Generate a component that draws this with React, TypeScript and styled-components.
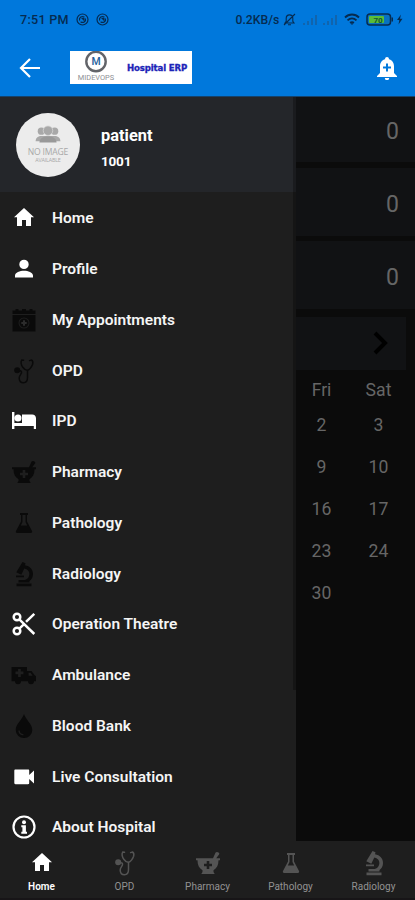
import React from "react";
import styled, { createGlobalStyle } from "styled-components";

const GlobalStyle = createGlobalStyle`
  * { box-sizing: border-box; }
  body { margin: 0; background: #1e1e1e; font-family: Roboto, "Liberation Sans", sans-serif; }
`;

const Screen = styled.div`
  width: 415px;
  height: 900px;
  display: flex;
  flex-direction: column;
  overflow: hidden;
  background: #1e1e1e;
`;

const Header = styled.header`
  height: 97px;
  flex: none;
  background: #0078dc;
  border-bottom: 1px solid #15426b;
`;

const StatusBar = styled.div`
  height: 39px;
  padding: 0 12px 0 20px;
  display: flex;
  align-items: center;
  color: #062b50;
`;

const Clock = styled.span`
  width: 56px;
  font-size: 12.6px;
  font-weight: 500;
  letter-spacing: 0.25px;
  white-space: nowrap;
`;

const StatusIcons = styled.div<{ $end?: boolean }>`
  display: flex;
  align-items: center;
  gap: ${(p) => (p.$end ? "6.5px" : "7px")};
  margin-left: ${(p) => (p.$end ? "auto" : "0")};
`;

const Speed = styled.span`
  font-size: 12.2px;
  font-weight: 500;
  width: 44px;
  margin-right: -3px;
  white-space: nowrap;
`;

const AppBar = styled.div`
  height: 57px;
  padding: 0 17px 0 19px;
  display: flex;
  align-items: center;
`;

const Logo = styled.div`
  width: 122px;
  height: 33px;
  margin-left: 29px;
  background: #fff;
  display: flex;
  align-items: center;
`;

const LogoMark = styled.div`
  width: 52px;
  height: 33px;
  display: flex;
  flex-direction: column;
  align-items: center;
  font-size: 7.4px;
  line-height: 9px;
  color: #8d8f94;
`;

const LogoName = styled.span`
  margin-left: 5px;
  font: bold 8.6px/12px "DejaVu Sans", sans-serif;
  -webkit-text-stroke: 0.3px #1d24b8;
  letter-spacing: -0.15px;
  color: #1d24b8;
  white-space: nowrap;
`;

const BellSlot = styled.div`
  margin-left: auto;
  display: flex;
`;

const Main = styled.main`
  height: 744px;
  flex: none;
  display: flex;
  overflow: hidden;
  background: #0b0b0b;
`;

const Drawer = styled.aside`
  width: 296px;
  flex: none;
  position: relative;
  background: #1e1e1e;
`;

const ScrollThumb = styled.div`
  position: absolute;
  top: 0;
  right: 0;
  width: 3px;
  height: 593px;
  background: rgba(0, 0, 0, 0.28);
`;

const Patient = styled.div`
  height: 95px;
  padding-left: 16px;
  display: flex;
  align-items: center;
  gap: 20px;
  background: #24262a;
  color: #fff;
`;

const Avatar = styled.div`
  width: 64px;
  height: 64px;
  border-radius: 50%;
  background: #ececec;
  display: flex;
  flex-direction: column;
  align-items: center;
  padding-top: 11px;
  color: #a8a8a8;
`;

const AvatarText = styled.span<{ $size: number; $gap: number }>`
  margin-top: ${(p) => p.$gap}px;
  font: ${(p) => p.$size}px/${(p) => p.$size}px "Open Sans", sans-serif;
  letter-spacing: -0.2px;
  white-space: nowrap;
`;

const PatientInfo = styled.div`
  display: flex;
  flex-direction: column;
  padding: 3px 0 0 1px;
  font-weight: 700;
`;

const PatientName = styled.span`
  font-size: 16.4px;
  line-height: 24px;
  margin-top: 4px;
`;

const PatientId = styled.span`
  font-size: 13.5px;
  line-height: 24px;
  margin-top: 1px;
  letter-spacing: -0.2px;
`;

const Menu = styled.nav`
  display: grid;
  grid-auto-rows: 50.75px;
  padding-top: 1px;
`;

const MenuItem = styled.a`
  display: flex;
  align-items: center;
  padding-left: 10px;
  font-size: 15.5px;
  font-weight: 600;
  color: #f5f5f5;
  white-space: nowrap;
`;

const MenuIcon = styled.span<{ $dark?: boolean }>`
  width: 42px;
  height: 28px;
  display: flex;
  color: ${(p) => (p.$dark ? "#0a0a0a" : "#fff")};
`;

const Dashboard = styled.section`
  flex: 1;
  display: flex;
  flex-direction: column;
`;

const Card = styled.div`
  height: 68px;
  flex: none;
  margin-bottom: 5.5px;
  padding: 5px 16px 0 0;
  display: flex;
  align-items: center;
  justify-content: flex-end;
  background: #111214;
  color: #666;
  font-size: 23px;

  &:first-child {
    height: 65px;
    padding-top: 3px;
  }
`;

const MonthBar = styled.div`
  height: 53px;
  width: 110px;
  margin-top: 2px;
  padding-right: 17px;
  display: flex;
  align-items: center;
  justify-content: flex-end;
  background: #111214;
  color: #000;
`;

const Calendar = styled.div`
  margin: 7px 0 0 -3px;
  display: grid;
  grid-template-columns: 57px 57px;
  grid-template-rows: 27px;
  grid-auto-rows: 42.2px;
  align-items: center;
  justify-items: center;
  color: #666;
  font-size: 17.6px;
`;

const TabBar = styled.nav`
  height: 59px;
  display: grid;
  grid-template-columns: repeat(5, 83px);
  background: #1e1e1e;
  border-bottom: 2px solid #171517;
`;

const Tab = styled.a<{ $active?: boolean }>`
  display: flex;
  flex-direction: column;
  align-items: center;
  padding-top: 8px;
  gap: 3px;
  font-size: 10px;
  line-height: 13px;
  font-weight: ${(p) => (p.$active ? 600 : 400)};
  color: ${(p) => (p.$active ? "#fff" : "#929292")};

  svg {
    color: ${(p) => (p.$active ? "#fff" : "#545454")};
  }
`;

type IconName =
  | "home" | "person" | "calendar" | "steth" | "bed" | "mortar" | "flask"
  | "scope" | "scissors" | "ambulance" | "drop" | "video" | "info";

const shapes: Record<IconName, React.ReactNode> = {
  home: <path d="M14 4 4 13.2h3V22h5v-6h4v6h5v-8.8h3z" />,
  person: <path d="M14 4.7a4.7 4.7 0 1 1 0 9.4 4.7 4.7 0 0 1 0-9.4zM5 22.5v-2c0-3.1 5-4.8 9-4.8s9 1.7 9 4.8v2z" />,
  calendar: (
    <g>
      <path fillRule="evenodd" d="M2.500 4.500h3V3h3v1.500h3.500V3h4v1.500h3.500V3h3v1.500h3V8h-23zM2.500 9h23v16.500h-23zM14 11.500a5.500 5.500 0 1 0 0 11 5.500 5.500 0 0 0 0-11zm0 1a4.500 4.500 0 1 1 0 9 4.500 4.500 0 0 1 0-9z" />
      <path d="M13 14.300h2V16h1.700v2H15v1.700h-2V18h-1.700v-2H13z" fill="#2c2c2c" />
    </g>
  ),
  steth: (
    <g fill="none" stroke="currentColor" strokeWidth="1.5" strokeLinecap="round">
      <path d="M13.5 3.3 11.8 3c-1.5 2-.5 5.5 1 7.3 1.600 2.200 3.200 3.200 4.800 3 1.800-.2 4.200-3.600 5-6 .5-1.800.2-3.600-1.200-4.300l-1.800.6" />
      <path d="M17.5 13.5v7c0 3.300-1.400 5.200-4 5.200s-4.300-2-4.300-4.800c0-3 3.300-4 2.200-6.600L8 13" />
      <circle cx="7.2" cy="13.3" r="2.3" fill="currentColor" />
    </g>
  ),
  bed: (
    <path fillRule="evenodd" d="M2 5h2.400v11H12V7.500h10.200c2.200 0 3.800 1.600 3.800 3.800V22h-2.200v-3H4.400v3H2zM8 7.500a3.500 3.500 0 1 1 0 7 3.500 3.500 0 0 1 0-7z" />
  ),
  mortar: (
    <path fillRule="evenodd" d="m19 9.200 2.600-5.600c1-1.500 4.600 0 3.600 1.700l-3 3.900H26v2h-1.500c0 5-1.800 8-5 10v1.800l1.200 2H7.300l1.200-2v-1.800c-3.200-2-5-5-5-10H2v-2zM12.700 12v2.700H10v2.600h2.700V20h2.600v-2.700H18v-2.600h-2.700V12z" />
  ),
  flask: (
    <path fillRule="evenodd" d="M10 4h8v2h-1v6.500l5 9.500c.5 1-.1 2-1.200 2H7.200c-1.100 0-1.700-1-1.200-2l5-9.500V6h-1zm2.500 2v7L10.800 16.500h6.400L15.500 13V6z" />
  ),
  scope: (
    <g>
      <path d="m12.500 2 3 1.300-.5 2c5 .7 8 4.200 8 8.700 0 3.200-1.500 5.600-3.500 7v1.500H8.500V20h6.200c2.700-.6 4.700-3 4.700-6 0-2.800-1.800-4.800-5.100-5.500l-3 6.200-5-2.400z" />
      <path d="M6 15.500h8v1.800H6zM6.500 23.500h15v2.800h-15z" />
    </g>
  ),
  scissors: (
    <g fill="none" stroke="currentColor" strokeWidth="2.5">
      <circle cx="7" cy="7" r="3.3" />
      <circle cx="7" cy="21" r="3.3" />
      <path d="M9.300 9.400 24.300 24M9.300 18.600l5-4.800M16 11.800l8.300-8" />
    </g>
  ),
  ambulance: (
    <path fillRule="evenodd" d="M1.500 6H17v4h4.500l3 4 1.500 1.300v5h-2a3 3 0 0 1-6 0h-7a3 3 0 0 1-6 0H1.500zm6.600 2v2.600H5.500v2.700h2.600V16h2.700v-2.700h2.600v-2.700h-2.600V8zm10.500 3.800v3h4l-2-3z" />
  ),
  drop: <path fillRule="evenodd" d="M14 2c1.700 5.500 8.300 10.200 8.300 16A8 8 0 0 1 14 26a8 8 0 0 1-8.300-8C5.700 12.200 12.300 7.500 14 2zm-5.600 16.500c0 2.800 2 4.800 5 4.800v-1.200c-2.500-.2-3.500-1.600-3.700-3.600z" />,
  video: <path d="M5.500 6.500H18c1 0 1.200.6 1.200 1.200V12l4.800-4.500v13L19.200 16v4c0 .8-.4 1.200-1.200 1.200H5.500c-.8 0-1.200-.4-1.200-1.200V7.700c0-.8.4-1.200 1.200-1.200z" />,
  info: (
    <g>
      <circle cx="14" cy="14" r="10.5" fill="none" stroke="currentColor" strokeWidth="2.2" />
      <circle cx="14" cy="9.3" r="2" />
      <path d="M11.300 12.300h4.600v6.500H17v2h-5.700v-2h1.100v-4.600h-1.100z" />
    </g>
  ),
};

const Icon = ({ name, size = 28 }: { name: IconName; size?: number }) => (
  <svg width={size} height={size} viewBox="0 0 28 28" fill="currentColor">{shapes[name]}</svg>
);

const menu: { label: string; icon: IconName; dark?: boolean }[] = [
  { label: "Home", icon: "home" },
  { label: "Profile", icon: "person" },
  { label: "My Appointments", icon: "calendar", dark: true },
  { label: "OPD", icon: "steth", dark: true },
  { label: "IPD", icon: "bed" },
  { label: "Pharmacy", icon: "mortar", dark: true },
  { label: "Pathology", icon: "flask", dark: true },
  { label: "Radiology", icon: "scope", dark: true },
  { label: "Operation Theatre", icon: "scissors" },
  { label: "Ambulance", icon: "ambulance", dark: true },
  { label: "Blood Bank", icon: "drop", dark: true },
  { label: "Live Consultation", icon: "video" },
  { label: "About Hospital", icon: "info" },
];

const tabs: { label: string; icon: IconName }[] = [
  { label: "Home", icon: "home" },
  { label: "OPD", icon: "steth" },
  { label: "Pharmacy", icon: "mortar" },
  { label: "Pathology", icon: "flask" },
  { label: "Radiology", icon: "scope" },
];

const days = ["Fri", "Sat", "2", "3", "9", "10", "16", "17", "23", "24", "30"];

const SyncIcon = () => (
  <svg width="13" height="13" viewBox="0 0 13 13" fill="none" stroke="currentColor">
    <circle cx="6.5" cy="6.5" r="5.5" strokeWidth="1.2" />
    <path d="M3.600 7.500a3 3 0 0 1 4.800-3.200M9.400 5.500a3 3 0 0 1-4.800 3.200" strokeWidth="1.2" />
    <path d="M5 5h3.500v3.500z" fill="currentColor" stroke="none" />
  </svg>
);

const MutedBell = () => (
  <svg width="13" height="13" viewBox="0 0 13 13" fill="none" stroke="currentColor" strokeWidth="1.1">
    <path d="M2 10h9L9.800 8.300V5.200a3.300 3.300 0 0 0-6.600 0v3.100zM5 11.700h3M12 1 1 12" />
  </svg>
);

const Signal = () => (
  <svg width="14" height="12" viewBox="0 0 14 12" fill="#1164ad">
    <path d="M0 9h2v2H0zM4 7h2v4H4zM8 4h2v7H8zM12 1h2v10h-2z" />
  </svg>
);

const Wifi = () => (
  <svg width="16" height="13" viewBox="0 0 16 13" fill="none" stroke="currentColor" strokeWidth="1.8">
    <path d="M1 4.500c4-4 10-4 14 0M3.500 7.300c2.600-2.400 6.400-2.400 9 0M6 9.800c1.400-1 2.600-1 4 0" />
    <path d="m8 12 1.500-1.800h-3z" fill="currentColor" stroke="none" />
  </svg>
);

const Battery = () => (
  <svg width="37" height="13" viewBox="0 0 37 13">
    <rect x="1" y="1" width="23.5" height="11" rx="3" fill="#0872c0" stroke="#062b50" strokeWidth="1.5" />
    <rect x="3" y="3" width="15" height="7" rx="1" fill="#59bd38" />
    <text x="12" y="9.5" textAnchor="middle" fontFamily="Roboto" fontSize="8" fontWeight="700" fill="#155332">70</text>
    <path d="M25.500 4.500h1.500v4h-1.500zM35 1.500 31 7h2.300l-.8 4.500 4-5.700H34z" fill="#062b50" />
  </svg>
);

export default function App() {
  return (
    <Screen>
      <GlobalStyle />
      <Header>
        <StatusBar>
          <Clock>7:51 PM</Clock>
          <StatusIcons><SyncIcon /><SyncIcon /></StatusIcons>
          <StatusIcons $end>
            <Speed>0.2KB/s</Speed>
            <MutedBell /><Signal /><Signal /><Wifi /><Battery />
          </StatusIcons>
        </StatusBar>
        <AppBar>
          <svg width="22" height="22" viewBox="0 0 22 22" fill="none" stroke="#fff" strokeWidth="2.2">
            <path d="M21 11H3M11 2l-9 9 9 9" />
          </svg>
          <Logo>
            <LogoMark>
              <svg width="24" height="22" viewBox="0 0 24 22">
                <circle cx="12" cy="10.5" r="9.7" fill="#fff" stroke="#626469" strokeWidth="2.4" />
                <text x="12" y="14.2" textAnchor="middle" fontFamily="Roboto" fontSize="10.5" fontWeight="500" fill="#24609b">M</text>
              </svg>
              MIDEVOPS
            </LogoMark>
            <LogoName>Hospital ERP</LogoName>
          </Logo>
          <BellSlot>
            <svg width="22" height="24" viewBox="0 0 22 24" fill="#fff">
              <path fillRule="evenodd" d="M11 1c1.100 0 1.900.8 1.900 1.800v.5c3.200.7 5.100 3.500 5.100 7V17l3 3v1H1v-1l3-3v-6.700c0-3.500 1.900-6.300 5.100-7v-.5C9.100 1.800 9.900 1 11 1zM10 7.500v3H7v2h3v3h2v-3h3v-2h-3v-3zM8.800 22h4.400a2.200 2.200 0 0 1-4.400 0z" />
            </svg>
          </BellSlot>
        </AppBar>
      </Header>
      <Main>
        <Drawer>
          <Patient>
            <Avatar>
              <svg width="28" height="20" viewBox="0 0 28 21" fill="#a8a8a8">
                <circle cx="7" cy="7.5" r="3.8" />
                <circle cx="21" cy="7.5" r="3.8" />
                <path d="M1 18c0-4 3-5.500 6-5.500h14c3 0 6 1.500 6 5.500z" />
                <path d="M5 19.500c0-4.500 4-6.500 9-6.500s9 2 9 6.500z" fill="#999" />
                <circle cx="14" cy="7" r="5" stroke="#d8d8d8" strokeWidth="0.8" />
              </svg>
              <AvatarText $size={8.6} $gap={4}>NO IMAGE</AvatarText>
              <AvatarText $size={5.4} $gap={2}>AVAILABLE</AvatarText>
            </Avatar>
            <PatientInfo>
              <PatientName>patient</PatientName>
              <PatientId>1001</PatientId>
            </PatientInfo>
          </Patient>
          <Menu>
            {menu.map((item) => (
              <MenuItem key={item.label}>
                <MenuIcon $dark={item.dark}><Icon name={item.icon} /></MenuIcon>
                {item.label}
              </MenuItem>
            ))}
          </Menu>
          <ScrollThumb />
        </Drawer>
        <Dashboard>
          <Card>0</Card>
          <Card>0</Card>
          <Card>0</Card>
          <MonthBar>
            <svg width="18" height="24" viewBox="0 0 18 24" fill="none" stroke="currentColor" strokeWidth="4">
              <path d="m4 2 10 10L4 22" />
            </svg>
          </MonthBar>
          <Calendar>
            {days.map((day) => <span key={day}>{day}</span>)}
          </Calendar>
        </Dashboard>
      </Main>
      <TabBar>
        {tabs.map((tab, i) => (
          <Tab key={tab.label} $active={i === 0}>
            <Icon name={tab.icon} />
            {tab.label}
          </Tab>
        ))}
      </TabBar>
    </Screen>
  );
}
